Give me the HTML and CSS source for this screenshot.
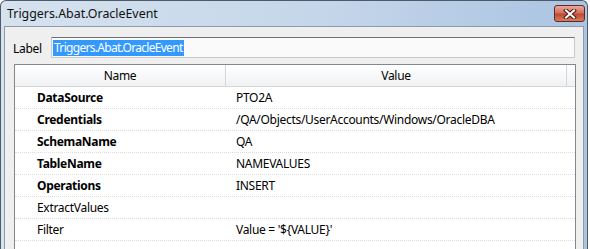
FILE: index.html
```html
<!DOCTYPE html>
<html lang="en">
  <head>
    <meta charset="UTF-8">
    <title>Triggers.Abat.OracleEvent</title>
    <link rel="stylesheet" href="styles.css">
  </head>
  <body>
    <div class="window">
      <div class="titlebar">
        <span class="title">Triggers.Abat.OracleEvent</span>
        <div class="close-btn">
          <svg width="16" height="10" viewBox="0 0 16 10">
            <path d="M4 1.5 L12 8.5 M12 1.5 L4 8.5" stroke="#4a1c14" stroke-width="4" stroke-linecap="square"/>
            <path d="M4 1.5 L12 8.5 M12 1.5 L4 8.5" stroke="#ffffff" stroke-width="2" stroke-linecap="square"/>
          </svg>
        </div>
      </div>

      <div class="client">
        <div class="label-row">
          <span class="label">Label</span>
          <div class="textbox"><span class="selected">Triggers.Abat.OracleEvent</span></div>
        </div>

        <div class="grid">
          <div class="grid-header">
            <div class="col-name">Name</div>
            <div class="col-value">Value</div>
            <div class="col-rest"></div>
          </div>
          <div class="row bold"><div class="col-name">DataSource</div><div class="col-value">PTO2A</div></div>
          <div class="row bold"><div class="col-name">Credentials</div><div class="col-value">/QA/Objects/UserAccounts/Windows/OracleDBA</div></div>
          <div class="row bold"><div class="col-name">SchemaName</div><div class="col-value">QA</div></div>
          <div class="row bold"><div class="col-name">TableName</div><div class="col-value">NAMEVALUES</div></div>
          <div class="row bold"><div class="col-name">Operations</div><div class="col-value">INSERT</div></div>
          <div class="row"><div class="col-name">ExtractValues</div><div class="col-value"></div></div>
          <div class="row"><div class="col-name">Filter</div><div class="col-value">Value = '${VALUE}'</div></div>
        </div>
      </div>
    </div>
  </body>
</html>
```

FILE: styles.css
```css
body {
  margin: 0;
  font-family: "Noto Sans", "Open Sans", sans-serif;
  font-size: 12px;
  letter-spacing: -0.3px;
  color: #000;
  background: #ffffff;
}

.window {
  width: 588px;
  height: 249px;
  overflow: hidden;
  box-sizing: border-box;
  border: 1px solid #4d5a68;
  border-bottom: none;
  border-radius: 6px 6px 0 0;
  background: linear-gradient(to right, #d6e2ee, #c4d6ea 55%, #aac4e1);
  padding: 0 3px 0 3px;
  display: flex;
  flex-direction: column;
}

.titlebar {
  height: 25px;
  display: flex;
  align-items: center;
  justify-content: space-between;
  padding: 0 0 0 3px;
  flex-shrink: 0;
}

.title {
  font-size: 12.4px;
  letter-spacing: 0;
  color: #111;
  padding-bottom: 1px;
}

.close-btn {
  width: 29px;
  height: 15px;
  margin-right: -1px;
  border: 1px solid #5e2a22;
  border-radius: 3px;
  background: linear-gradient(#eaa99b, #d2705f 45%, #c04a34 55%, #d77c5f);
  display: flex;
  align-items: center;
  justify-content: center;
}

.client {
  flex: 1;
  background: #efefef;
  border: 1px solid #8d9bab;
  border-bottom: none;
  padding: 10px 8px 0 8px;
}

.label-row {
  display: flex;
  align-items: center;
}

.label {
  width: 38px;
  padding-top: 1px;
}

.textbox {
  flex: 1;
  height: 21px;
  box-sizing: border-box;
  background: #fafafa;
  border: 1px solid #c9c9c9;
  border-top-color: #6f6f6f;
  padding: 1px 1px;
  display: flex;
  align-items: center;
}

.selected {
  background: #3399ff;
  color: #fff;
  line-height: 16px;
  padding: 0 1px;
  letter-spacing: -0.7px;
}

.grid {
  margin-top: 6px;
  margin-left: 1px;
  margin-right: -1px;
  background: #fff;
  border: 1px solid #828790;
  border-bottom: none;
  height: 200px;
}

.grid-header {
  display: flex;
  height: 21px;
  background: linear-gradient(#ffffff, #f7f8f9 50%, #f1f2f4);
  border-bottom: 1px solid #d5d5d5;
}

.grid-header > div {
  display: flex;
  align-items: center;
  justify-content: center;
  border-right: 1px solid #d5d5d5;
  box-sizing: border-box;
}

.grid-header .col-rest {
  flex: 1;
  border-right: none;
}

.col-name {
  width: 211px;
}

.col-value {
  width: 341px;
}

.row {
  display: flex;
  height: 22px;
  align-items: center;
  box-sizing: border-box;
  border-bottom: 1px dotted #dcdcdc;
}

.row .col-name {
  padding-left: 22px;
  box-sizing: border-box;
}

.row .col-value {
  padding-left: 10px;
  box-sizing: border-box;
}

.row.bold .col-name {
  font-weight: bold;
}
```
